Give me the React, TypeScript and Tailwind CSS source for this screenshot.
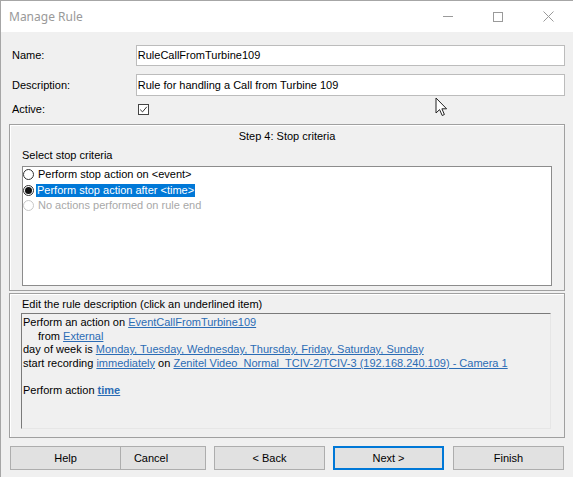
import React from "react";

const Radio = ({ checked, disabled }: { checked?: boolean; disabled?: boolean }) => (
  <span
    className={
      disabled
        ? "w-[11px] h-[11px] rounded-full border border-[#c8c8c8] bg-white flex items-center justify-center shrink-0"
        : "w-[11px] h-[11px] rounded-full border border-[#333333] bg-white flex items-center justify-center shrink-0"
    }
  >
    {checked && <span className="w-[7px] h-[7px] rounded-full bg-[#111111]" />}
  </span>
);

const Link = ({ children, bold }: { children: React.ReactNode; bold?: boolean }) => (
  <span
    className={
      bold
        ? "text-[#2b6cb5] underline decoration-1 underline-offset-[1px] font-bold"
        : "text-[#2b6cb5] underline decoration-1 underline-offset-[1px]"
    }
  >
    {children}
  </span>
);

export default function App() {
  return (
    <div className="w-[573px] h-[477px] bg-[#f0f0f0] border-l border-t border-[#a6a6a6] flex flex-col relative overflow-hidden font-['Liberation_Sans',Arial,sans-serif] text-[11px] text-black">
      {/* Title bar */}
      <div className="h-[31px] bg-white flex items-center shrink-0">
        <div className="pl-[8px] flex-1 text-[12px] text-[#999999] font-['Noto_Sans',sans-serif] leading-none">
          Manage Rule
        </div>
        <div className="w-[50px] h-full flex items-center justify-center">
          <span className="w-[10px] h-px bg-[#9a9a9a]" />
        </div>
        <div className="w-[50px] h-full flex items-center justify-center">
          <span className="w-[10px] h-[10px] border border-[#9a9a9a]" />
        </div>
        <div className="w-[50px] h-full flex items-center justify-center">
          <svg width="11" height="11" viewBox="0 0 11 11">
            <path d="M0.5 0.5 L10.5 10.5 M10.5 0.5 L0.5 10.5" stroke="#9a9a9a" strokeWidth="1" fill="none" />
          </svg>
        </div>
      </div>

      {/* Body */}
      <div className="flex flex-col pl-[8px] pr-[8px]">
        {/* Name */}
        <div className="mt-[13px] flex items-center h-[21px]">
          <div className="w-[127px] pl-[3px]">Name:</div>
          <div className="w-[430px] h-[21px] bg-white border border-[#bcbcbc] flex items-center pl-[1px]">
            RuleCallFromTurbine109
          </div>
        </div>
        {/* Description */}
        <div className="mt-[8px] flex items-center h-[22px]">
          <div className="w-[127px] pl-[3px]">Description:</div>
          <div className="w-[430px] h-[22px] bg-white border border-[#bcbcbc] flex items-center pl-[1px]">
            Rule for handling a Call from Turbine 109
          </div>
        </div>
        {/* Active */}
        <div className="mt-[7px] flex items-center h-[13px]">
          <div className="w-[127px] pl-[3px]">Active:</div>
          <div className="ml-[2px] w-[11px] h-[11px] bg-white border border-[#444444] flex items-center justify-center">
            <svg width="9" height="9" viewBox="0 0 9 9">
              <path d="M1.2 4.6 L3.5 6.9 L7.8 1.8" stroke="#333333" strokeWidth="1" fill="none" />
            </svg>
          </div>
        </div>

        {/* Step panel */}
        <div className="mt-[8px] h-[167px] border border-[#a0a0a0] shadow-[inset_1px_1px_0_#ffffff] flex flex-col px-[12px]">
          <div className="mt-[5px] h-[13px] leading-[13px] text-center">Step 4: Stop criteria</div>
          <div className="mt-[6px] h-[13px] leading-[13px]">Select stop criteria</div>
          <div className="mt-[4px] h-[120px] bg-white border border-[#8c8c8c] flex flex-col">
            <div className="h-[15.5px] flex items-center">
              <Radio />
              <span className="ml-[3px] px-px leading-[13px]">Perform stop action on &lt;event&gt;</span>
            </div>
            <div className="h-[15.5px] flex items-center">
              <Radio checked />
              <span className="ml-[2px] px-px leading-[13px] bg-[#0078d7] text-white">Perform stop action after &lt;time&gt;</span>
            </div>
            <div className="h-[15.5px] flex items-center">
              <Radio disabled />
              <span className="ml-[3px] px-px leading-[13px] text-[#a8a8a8]">No actions performed on rule end</span>
            </div>
          </div>
        </div>

        {/* Description panel */}
        <div className="mt-[2px] h-[145px] border border-[#a0a0a0] shadow-[inset_1px_1px_0_#ffffff] flex flex-col px-[12px]">
          <div className="mt-[4px] h-[13px] leading-[13px]">Edit the rule description (click an underlined item)</div>
          <div className="mt-[2px] -ml-[1px] w-[530px] h-[116px] border-t border-l border-[#7a7a7a] border-r border-b border-r-[#e6e6e6] border-b-[#e6e6e6] pl-[1px] pt-[2px] leading-[13.6px] whitespace-nowrap">
            <div>
              Perform an action on <Link>EventCallFromTurbine109</Link>
            </div>
            <div className="pl-[15px]">
              from <Link>External</Link>
            </div>
            <div>
              day of week is <Link>Monday, Tuesday, Wednesday, Thursday, Friday, Saturday, Sunday</Link>
            </div>
            <div>
              start recording <Link>immediately</Link> on{" "}
              <Link>Zenitel Video_Normal_TCIV-2/TCIV-3 (192.168.240.109) - Camera 1</Link>
            </div>
            <div className="h-[13.6px]" />
            <div>
              Perform action <Link bold>time</Link>
            </div>
          </div>
        </div>
      </div>

      {/* Buttons */}
      <div className="mt-[8px] pl-[9px] flex h-[24px] text-[11px]">
        <button className="relative z-10 w-[111px] h-[24px] bg-[#e1e1e1] border border-[#adadad] flex items-center justify-center">
          Help
        </button>
        <button className="-ml-[25px] w-[110px] h-[24px] bg-[#e1e1e1] border border-[#adadad] flex items-center justify-center">
          Cancel
        </button>
        <button className="ml-[8px] w-[111px] h-[24px] bg-[#e1e1e1] border border-[#adadad] flex items-center justify-center">
          &lt; Back
        </button>
        <button className="ml-[8px] w-[111px] h-[24px] bg-[#e1e1e1] border border-[#0078d7] shadow-[inset_0_0_0_1px_#0078d7] flex items-center justify-center">
          Next &gt;
        </button>
        <button className="ml-[9px] w-[111px] h-[24px] bg-[#e1e1e1] border border-[#adadad] flex items-center justify-center">
          Finish
        </button>
      </div>

      {/* Mouse cursor */}
      <svg className="absolute left-[434px] top-[96px]" width="13" height="20" viewBox="0 0 13 20">
        <path d="M1 1 L1 16 L4.6 12.6 L7.2 18.5 L9.4 17.5 L6.9 11.8 L11.6 11.8 Z" fill="#ffffff" stroke="#222222" strokeWidth="1" strokeLinejoin="round" />
      </svg>
    </div>
  );
}
